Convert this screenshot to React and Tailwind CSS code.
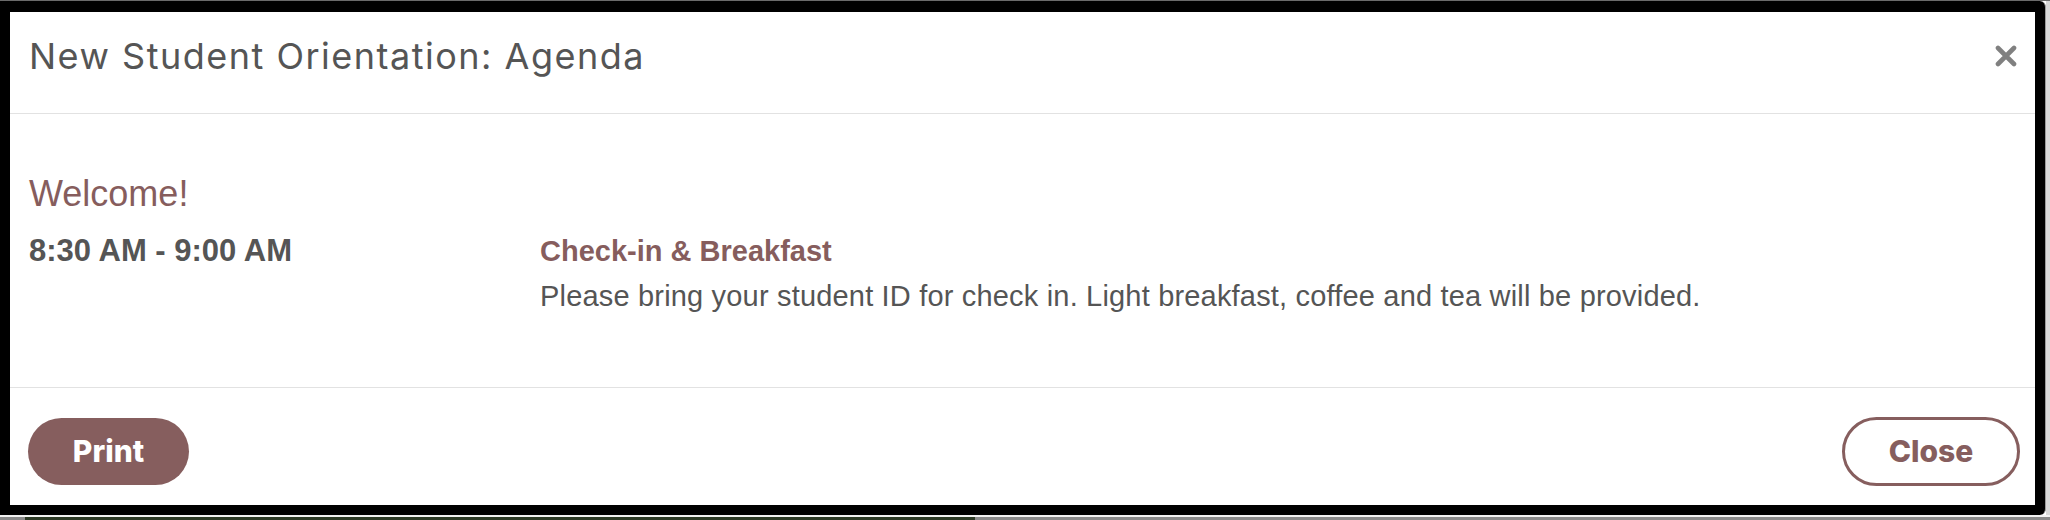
import React from "react";

export default function App() {
  return (
    <div className="relative w-[2050px] h-[520px] bg-white overflow-hidden flex flex-col">
      <div className="h-px w-full bg-[#6a6a6a]" />
      <div className="flex">
        <div className="w-[2046px] h-[514px] bg-black rounded-r-[6px] border-r border-[#9a9a9a] pt-[11px] pl-[10px] pr-[10px]">
          <div className="w-[2025px] h-[493px] bg-white flex flex-col">
            {/* Header */}
            <div className="h-[87px] pb-[14px] flex items-center justify-between pl-[19px] pr-[18px] border-b border-[#e2e2e2] box-content">
              <h2
                className="text-[36px] tracking-[1.5px] text-[#555555] leading-none"
                style={{ fontFamily: "Inter, 'Open Sans', sans-serif" }}
              >
                New Student Orientation: Agenda
              </h2>
              <button className="w-[22px] h-[22px] flex items-center justify-center">
                <svg width="22" height="22" viewBox="0 0 22 22">
                  <path d="M3 3 L19 19 M19 3 L3 19" stroke="#808080" strokeWidth="4.6" strokeLinecap="round" />
                </svg>
              </button>
            </div>
            {/* Body */}
            <div
              className="h-[274px] pl-[19px] pt-[59px] border-b border-[#e2e2e2] box-border"
              style={{ fontFamily: "'Liberation Sans', Arial, sans-serif" }}
            >
              <h3 className="text-[36px] leading-[42px] text-[#865d5d]">Welcome!</h3>
              <div className="mt-[16px] flex items-start">
                <div className="w-[511px] text-[31px] leading-[40px] font-bold text-[#555555]">
                  8:30 AM - 9:00 AM
                </div>
                <div>
                  <div className="text-[29px] leading-[40px] font-bold text-[#865d5d]">
                    Check-in &amp; Breakfast
                  </div>
                  <p className="mt-[7px] text-[29px] tracking-[0.18px] leading-[36px] text-[#555555]">
                    Please bring your student ID for check in. Light breakfast, coffee and tea will be provided.
                  </p>
                </div>
              </div>
            </div>
            {/* Footer */}
            <div
              className="flex-1 flex items-start justify-between pl-[18px] pr-[15px] pt-[30px]"
              style={{ fontFamily: "Inter, 'Open Sans', sans-serif" }}
            >
              <button className="w-[161px] h-[67px] rounded-full bg-[#865e5e] text-white text-[30px] font-extrabold">
                Print
              </button>
              <button className="w-[178px] h-[69px] -mt-[1px] rounded-full border-[3px] border-[#865e5e] text-[#865e5e] text-[30px] font-extrabold">
                Close
              </button>
            </div>
          </div>
        </div>
        <div className="flex-1 bg-[#d8d8d8]" />
      </div>
      <div className="h-[2px] w-full bg-[#f2f2f2]" />
      <div className="flex-1 flex">
        <div className="w-[25px] bg-[#8a8a8a]" />
        <div className="w-[950px] bg-[#2c3a25]" />
        <div className="flex-1 bg-[#8a8a8a]" />
      </div>
    </div>
  );
}
